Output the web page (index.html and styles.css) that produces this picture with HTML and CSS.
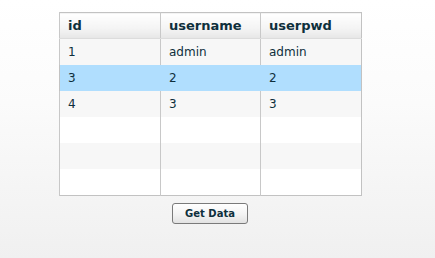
FILE: index.html
```html
<!DOCTYPE html>
<html lang="en">
<head>
    <meta charset="UTF-8">
    <title>Users</title>
    <link rel="stylesheet" href="styles.css">
</head>
<body>
    <div class="container">
        <table class="grid">
            <colgroup>
                <col class="col-id">
                <col class="col-name">
                <col class="col-pwd">
            </colgroup>
            <thead>
                <tr>
                    <th>id</th>
                    <th>username</th>
                    <th>userpwd</th>
                </tr>
            </thead>
            <tbody>
                <tr class="alt"><td>1</td><td>admin</td><td>admin</td></tr>
                <tr class="selected"><td>3</td><td>2</td><td>2</td></tr>
                <tr class="alt"><td>4</td><td>3</td><td>3</td></tr>
                <tr><td></td><td></td><td></td></tr>
                <tr class="alt"><td></td><td></td><td></td></tr>
                <tr><td></td><td></td><td></td></tr>
            </tbody>
        </table>
        <div class="actions">
            <button class="get-button">Get Data</button>
        </div>
    </div>
</body>
</html>
```

FILE: styles.css
```css
html {
    height: 100%;
}

body {
    margin: 0;
    min-height: 100%;
    font-family: 'DejaVu Sans', Verdana, sans-serif;
    color: #0e2f3c;
    background: linear-gradient(180deg, #ffffff 0%, #fbfbfb 40%, #f0f0f0 100%);
}

.container {
    width: 302px;
    margin-left: 59px;
    padding-top: 12px;
}

/* Tabela */
.grid {
    width: 302px;
    table-layout: fixed;
    border-collapse: collapse;
    border: 1px solid #c2c2c2;
}

.col-id {
    width: 101px;
}

.col-name {
    width: 100px;
}

.col-pwd {
    width: 101px;
}

.grid th {
    height: 25px;
    padding: 0 8px;
    text-align: left;
    font-size: 13px;
    font-weight: bold;
    background: linear-gradient(180deg, #ffffff 0%, #f4f4f4 60%, #e6e6e6 100%);
    border-left: 1px solid #c8c8c8;
    border-bottom: 1px solid #dcdcdc;
}

.grid td {
    height: 26px;
    padding: 0 8px;
    font-size: 12px;
    background-color: #ffffff;
    border-left: 1px solid #c8c8c8;
}

.grid tr.alt td {
    background-color: #f7f7f7;
}

.grid tr.selected td {
    background-color: #b0defe;
    border-left-color: #b0defe;
}

.grid tr.selected td:first-child {
    border-left-color: #c2c2c2;
}

/* Botao */
.actions {
    display: flex;
    justify-content: center;
    margin-top: 7px;
}

.get-button {
    width: 76px;
    height: 21px;
    padding: 0;
    font-family: 'DejaVu Sans', Verdana, sans-serif;
    font-size: 10px;
    font-weight: bold;
    color: #0e2f3c;
    background: linear-gradient(180deg, #ffffff 0%, #f3f3f3 55%, #e2e2e2 100%);
    border: 1px solid #7a7a7a;
    border-radius: 3px;
    cursor: pointer;
}
```
